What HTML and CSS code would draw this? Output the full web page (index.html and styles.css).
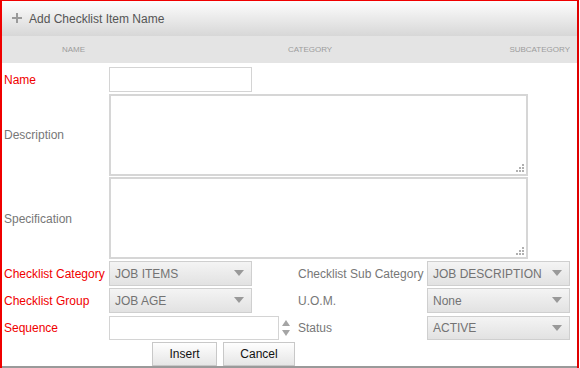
FILE: index.html
```html
<!DOCTYPE html>
<html lang="en">
<head>
  <meta charset="UTF-8" />
  <title>Add Checklist Item Name</title>
  <link rel="stylesheet" href="styles.css">
</head>
<body>
  <div class="panel">
    <div class="panel-head">
      <svg class="plus" width="10" height="10" viewBox="0 0 10 10">
        <path d="M5 0V10M0 5H10" stroke="#9a9a9a" stroke-width="2"/>
      </svg>
      <span>Add Checklist Item Name</span>
    </div>

    <div class="columns">
      <span class="col-name">NAME</span>
      <span class="col-cat">CATEGORY</span>
      <span class="col-sub">SUBCATEGORY</span>
    </div>

    <form class="form">
      <label class="req">Name</label>
      <input class="field name-input" type="text">
      <span></span><span></span>

      <label class="opt">Description</label>
      <div class="area-wrap">
        <textarea class="area"></textarea>
        <svg class="grip" width="8" height="8" viewBox="0 0 8 8" fill="#b0b0b0">
          <rect x="6" y="0" width="2" height="2"/>
          <rect x="3" y="3" width="2" height="2"/><rect x="6" y="3" width="2" height="2"/>
          <rect x="0" y="6" width="2" height="2"/><rect x="3" y="6" width="2" height="2"/><rect x="6" y="6" width="2" height="2"/>
        </svg>
      </div>

      <label class="opt">Specification</label>
      <div class="area-wrap spec">
        <textarea class="area"></textarea>
        <svg class="grip" width="8" height="8" viewBox="0 0 8 8" fill="#b0b0b0">
          <rect x="6" y="0" width="2" height="2"/>
          <rect x="3" y="3" width="2" height="2"/><rect x="6" y="3" width="2" height="2"/>
          <rect x="0" y="6" width="2" height="2"/><rect x="3" y="6" width="2" height="2"/><rect x="6" y="6" width="2" height="2"/>
        </svg>
      </div>

      <label class="req">Checklist Category</label>
      <div class="select"><span>JOB ITEMS</span><i class="arrow"></i></div>
      <label class="opt second">Checklist Sub Category</label>
      <div class="select"><span>JOB DESCRIPTION</span><i class="arrow"></i></div>

      <label class="req">Checklist Group</label>
      <div class="select"><span>JOB AGE</span><i class="arrow"></i></div>
      <label class="opt second">U.O.M.</label>
      <div class="select"><span>None</span><i class="arrow"></i></div>

      <label class="req seq">Sequence</label>
      <div class="spin seq">
        <input class="field seq-input" type="text">
        <svg class="spinner" width="10" height="18" viewBox="0 0 10 18" fill="#a5a5a5">
          <path d="M1 7L5 1L9 7Z"/>
          <path d="M1 11L5 17L9 11Z"/>
        </svg>
      </div>
      <label class="opt second seq">Status</label>
      <div class="select seq"><span>ACTIVE</span><i class="arrow"></i></div>

      <div class="buttons">
        <button type="button" class="btn insert">Insert</button>
        <button type="button" class="btn cancel">Cancel</button>
      </div>
    </form>
  </div>
</body>
</html>
```

FILE: styles.css
```css
* {
  margin: 0;
  padding: 0;
  box-sizing: border-box;
  font-family: 'Liberation Sans', Arial, sans-serif;
}

body {
  background: white;
  width: 580px;
  height: 368px;
  overflow: hidden;
}

.panel {
  width: 579px;
  height: 368px;
  border-top: 1px solid #f00000;
  border-left: 2px solid #f00000;
  border-right: 2px solid #e00000;
}

.panel-head {
  height: 35px;
  display: flex;
  align-items: center;
  gap: 7px;
  padding-left: 10px;
  background: linear-gradient(#fdfdfd, #d7d7d7);
  color: #555;
  font-size: 12px;
}

.plus {
  margin-top: -2px;
}

.columns {
  height: 27px;
  display: flex;
  align-items: center;
  background: #e4e4e4;
  color: #9c9c9c;
  font-size: 8px;
}

.col-name {
  width: 286px;
  padding-left: 60px;
}

.col-cat {
  flex: 1;
}

.col-sub {
  padding-right: 7px;
}

.form {
  display: grid;
  grid-template-columns: 107px 188px 130px 143px;
  row-gap: 2px;
  padding-top: 4px;
  height: 305px;
  border-bottom: 2px solid #9a9a9a;
}

.form label {
  display: flex;
  align-items: center;
  padding-left: 2px;
  font-size: 12px;
  white-space: nowrap;
}

.req {
  color: #f00000;
}

.opt {
  color: #777;
}

.form .second {
  padding-left: 1px;
}

.field {
  height: 25px;
  border: 1px solid #d4d4d4;
  background: white;
  outline: none;
}

.name-input {
  width: 143px;
}

.area-wrap {
  grid-column: 2 / 5;
  position: relative;
  width: 419px;
  height: 82px;
}

.area-wrap.spec {
  margin-top: -1px;
}

.area {
  display: block;
  width: 100%;
  height: 100%;
  border: 2px solid #d6d6d6;
  resize: none;
  outline: none;
}

.grip {
  position: absolute;
  right: 4px;
  bottom: 4px;
}

.select {
  height: 25px;
  width: 143px;
  display: flex;
  align-items: center;
  justify-content: space-between;
  padding: 0 7px 0 5px;
  border: 1px solid #cfcfcf;
  background: linear-gradient(#f4f4f4, #e2e2e2);
  color: #737373;
  font-size: 12px;
}

.arrow {
  width: 0;
  height: 0;
  border-left: 5px solid transparent;
  border-right: 5px solid transparent;
  border-top: 6px solid #999;
  margin-top: -1px;
}

.seq {
  margin-top: 1px;
}

.spin {
  display: flex;
  align-items: center;
  gap: 2px;
}

.seq-input {
  width: 170px;
  height: 24px;
}

.select.seq {
  height: 24px;
}

.buttons {
  grid-column: 1 / -1;
  display: flex;
  gap: 6px;
  padding-left: 150px;
}

.btn {
  height: 24px;
  border: 1px solid #c8c8c8;
  background: linear-gradient(#fefefe, #e6e6e6);
  color: #111;
  font-size: 12px;
}

.insert {
  width: 65px;
}

.cancel {
  width: 72px;
}
```
